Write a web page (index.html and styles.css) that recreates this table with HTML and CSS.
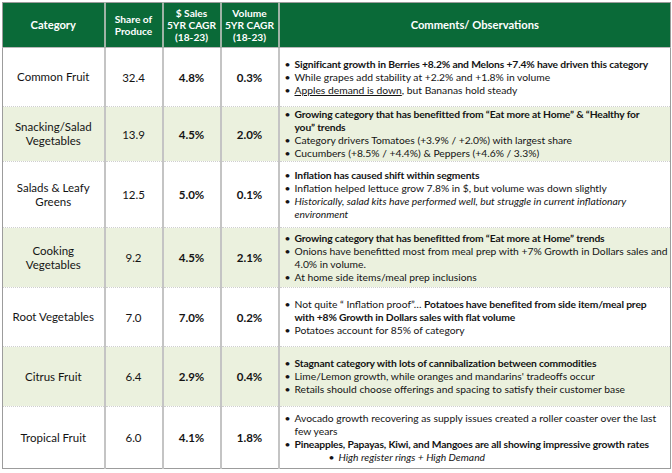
FILE: index.html
```html
<!DOCTYPE html>
<html lang="en">
<head>
<meta charset="utf-8">
<title>Produce Categories</title>
<link rel="stylesheet" href="styles.css">
</head>
<body>
<table class="grid">
  <colgroup>
    <col class="c-cat"><col class="c-num"><col class="c-num"><col class="c-num"><col class="c-com">
  </colgroup>
  <thead>
    <tr class="head">
      <th class="h-big">Category</th>
      <th>Share of<br>Produce</th>
      <th>$ Sales<br>5YR CAGR<br>(18-23)</th>
      <th>Volume<br>5YR CAGR<br>(18-23)</th>
      <th class="h-big">Comments/ Observations</th>
    </tr>
  </thead>
  <tbody>
    <tr class="r1">
      <td class="cat">Common Fruit</td><td class="num">32.4</td><td class="num b">4.8%</td><td class="num b">0.3%</td>
      <td class="com"><ul>
        <li><b>Significant growth in Berries +8.2% and Melons +7.4% have driven this category</b></li>
        <li>While grapes add stability at +2.2% and +1.8% in volume</li>
        <li><u>Apples demand is down</u>, but Bananas hold steady</li>
      </ul></td>
    </tr>
    <tr class="r2 alt">
      <td class="cat">Snacking/Salad<br>Vegetables</td><td class="num">13.9</td><td class="num b">4.5%</td><td class="num b">2.0%</td>
      <td class="com"><ul>
        <li><b>Growing category that has benefitted from “Eat more at Home” &amp; “Healthy for<br>you” trends</b></li>
        <li>Category drivers Tomatoes (+3.9% / +2.0%) with largest share</li>
        <li>Cucumbers (+8.5% / +4.4%) &amp; Peppers (+4.6% / 3.3%)</li>
      </ul></td>
    </tr>
    <tr class="r3">
      <td class="cat">Salads &amp; Leafy<br>Greens</td><td class="num">12.5</td><td class="num b">5.0%</td><td class="num b">0.1%</td>
      <td class="com"><ul>
        <li><b>Inflation has caused shift within segments</b></li>
        <li>Inflation helped lettuce grow 7.8% in $, but volume was down slightly</li>
        <li><i>Historically, salad kits have performed well, but struggle in current inflationary<br>environment</i></li>
      </ul></td>
    </tr>
    <tr class="r4 alt">
      <td class="cat">Cooking<br>Vegetables</td><td class="num">9.2</td><td class="num b">4.5%</td><td class="num b">2.1%</td>
      <td class="com"><ul>
        <li><b>Growing category that has benefitted from “Eat more at Home” trends</b></li>
        <li>Onions have benefitted most from meal prep with +7% Growth in Dollars sales and<br>4.0% in volume.</li>
        <li>At home side items/meal prep inclusions</li>
      </ul></td>
    </tr>
    <tr class="r5">
      <td class="cat">Root Vegetables</td><td class="num">7.0</td><td class="num b">7.0%</td><td class="num b">0.2%</td>
      <td class="com"><ul>
        <li>Not quite “ Inflation proof”… <b>Potatoes have benefited from side item/meal prep<br>with +8% Growth in Dollars sales with flat volume</b></li>
        <li>Potatoes account for 85% of category</li>
      </ul></td>
    </tr>
    <tr class="r6 alt">
      <td class="cat">Citrus Fruit</td><td class="num">6.4</td><td class="num b">2.9%</td><td class="num b">0.4%</td>
      <td class="com"><ul>
        <li><b>Stagnant category with lots of cannibalization between commodities</b></li>
        <li>Lime/Lemon growth, while oranges and mandarins' tradeoffs occur</li>
        <li>Retails should choose offerings and spacing to satisfy their customer base</li>
      </ul></td>
    </tr>
    <tr class="r7">
      <td class="cat">Tropical Fruit</td><td class="num">6.0</td><td class="num b">4.1%</td><td class="num b">1.8%</td>
      <td class="com"><ul>
        <li>Avocado growth recovering as supply issues created a roller coaster over the last<br>few years</li>
        <li><b>Pineapples, Papayas, Kiwi, and Mangoes are all showing impressive growth rates</b>
          <ul class="sub"><li><i>High register rings + High Demand</i></li></ul>
        </li>
      </ul></td>
    </tr>
  </tbody>
</table>
</body>
</html>
```

FILE: styles.css
```css
html, body {
  margin: 0;
  padding: 0;
  background: #ffffff;
}
body {
  padding: 2px 0 0 2px;
  font-family: "Lato", "Liberation Sans", sans-serif;
  color: #141414;
}
.grid {
  border-collapse: collapse;
  table-layout: fixed;
  width: 668px;
  border: 1px solid #9c9c9c;
}
.c-cat { width: 102px; }
.c-num { width: 58px; }
.c-com { width: 392px; }

.head th {
  background: #0a6a38;
  color: #ffffff;
  font-size: 10.2px;
  line-height: 12px;
  font-weight: 700;
  text-align: center;
  vertical-align: middle;
  border-left: 2px solid #9fb3a6;
  border-bottom: 1px solid #b9b9b9;
  padding: 0;
  height: 44px;
}
.head th:first-child { border-left: none; }
.head th.h-big { font-size: 11.2px; }

tbody td {
  border-left: 2px solid #c4c4c4;
  border-top: 1px dotted #cfcfcf;
  padding: 0;
  vertical-align: middle;
  overflow: hidden;
}
tbody td:first-child { border-left: none; }
tbody tr.alt td { background: #ebf1de; }

.r1 { height: 59px; }
.r2 { height: 55px; }
.r3 { height: 66px; }
.r4 { height: 60px; }
.r5 { height: 59px; }
.r6 { height: 60px; }
.r7 { height: 62px; }

.cat {
  text-align: center;
  font-size: 11.5px;
  line-height: 14px;
}
.num {
  text-align: center;
  font-size: 11.5px;
}
.num.b { font-weight: 700; }

.com { font-size: 10.3px; line-height: 13px; }
.com ul {
  list-style: none;
  margin: 0;
  padding: 0 2px 0 5px;
}
.com li {
  position: relative;
  padding-left: 10px;
  white-space: nowrap;
}
.com li::before {
  content: "•";
  position: absolute;
  left: 0;
  top: 0;
}
.com ul.sub {
  padding: 0 0 0 34px;
}
.com b {
  font-weight: 700;
  letter-spacing: -0.15px;
}
```
